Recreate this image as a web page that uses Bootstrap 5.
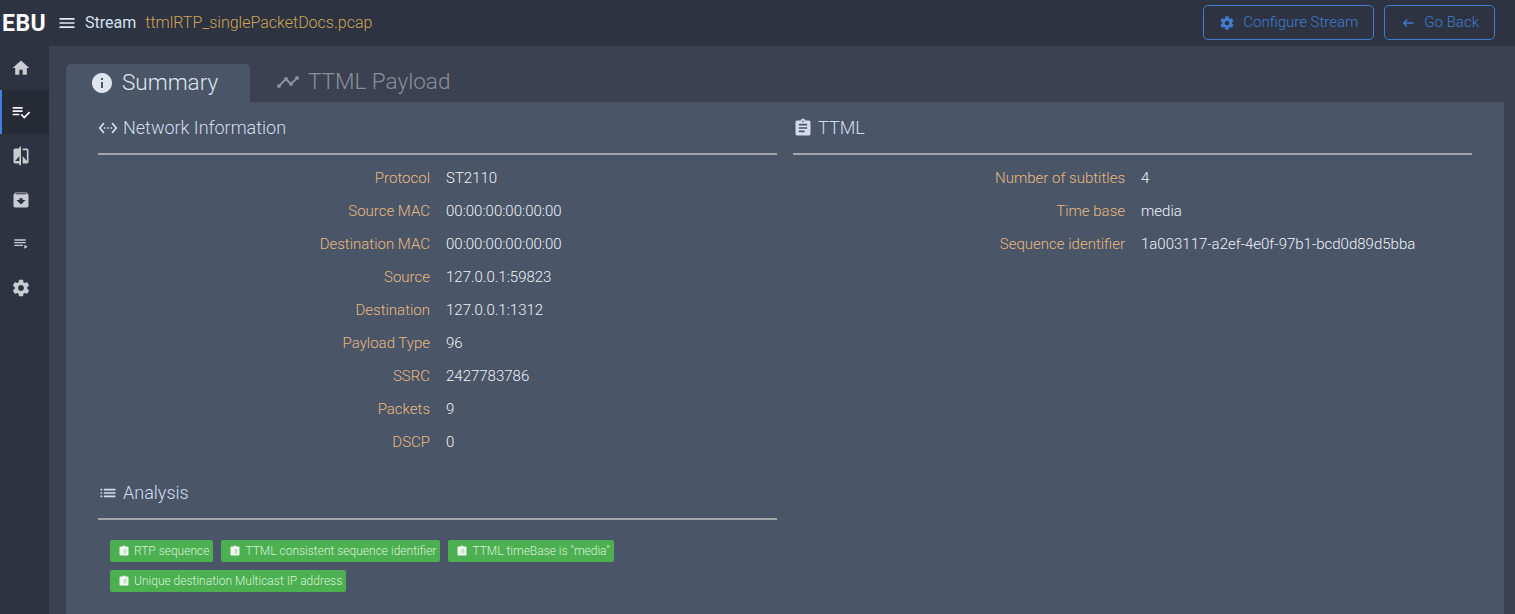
<!DOCTYPE html>
<html lang="en">
<head>
  <meta charset="UTF-8">
  <meta name="viewport" content="width=device-width, initial-scale=1.0">
  <title>Stream</title>
  <link href="https://cdn.jsdelivr.net/npm/bootstrap@5.3.0/dist/css/bootstrap.min.css" rel="stylesheet">
  <style>
    html, body { height: 100%; overflow: hidden; }
    body {
      font-family: Roboto, "Liberation Sans", sans-serif;
      font-weight: 300;
      background: #3b4151;
      color: #e8edf4;
    }
    svg { fill: currentColor; flex: none; display: block; }

    /* top bar */
    .topbar { height: 46px; background: #2d3340; padding-right: 20px; }
    .ebu-logo { width: 49px; padding-left: 2px; font-size: 23px; font-weight: 700; letter-spacing: .5px; color: #fff; line-height: 1; }
    .menu-icon { color: #e6e9ee; margin-left: 8px; margin-right: 8px; }
    .stream-title { font-size: 16px; font-weight: 400; color: #d5e2f2; }
    .stream-file { font-size: 16px; color: #cda557; margin-left: 9px; }
    .top-actions { gap: 10px; }
    .btn-top {
      height: 35px; padding: 0 15px; font-size: 15px; font-weight: 300;
      color: #437bd0; border: 1px solid #437bd0; border-radius: 5px; margin-top: -1px;
    }

    /* sidebar */
    .side-nav { width: 49px; background: #2d3340; flex: none; }
    .side-item { height: 44px; color: #c9ccd1; border-left: 2px solid transparent; padding-right: 9px; }
    .side-item.is-active { background: #262b35; border-left-color: #3f7fe0; color: #f2f4f7; }

    /* tabs */
    .main-area { padding: 18px 11px 0 17px; min-width: 0; }
    .tab-row { height: 38px; }
    .tab-item { font-size: 22.5px; padding: 0 24px; line-height: 1; }
    .tab-item.is-active { background: #4a5568; color: #dfe5ee; border-radius: 5px 5px 0 0; width: 184px; }
    .tab-item.is-muted { color: #8a8f9b; padding: 0 26px 2px; }
    .tab-label { margin-bottom: 2px; }

    /* panel */
    .panel-box { background: #4a5568; padding: 0 32px; }
    .sect-head { height: 53px; font-size: 18px; color: #d3dded; border-bottom: 2px solid #a2a5aa; gap: 5px; }
    .sect-gap { padding-top: 7px; }
    .sect-next { margin-top: 8px; }
    .info-row { height: 33px; font-size: 15px; }
    .info-label { width: 332px; text-align: right; color: #e9b97f; flex: none; }
    .info-value { margin-left: 16px; color: #eef3f9; }
    .check-list { padding: 20px 0 0 12px; gap: 8px; }
    .check-pill {
      height: 22px; background: #4caf50; color: #d9f1d9; font-size: 12px; font-weight: 300;
      border-radius: 2px; padding: 0 4px 0 8px;
    }
    .check-pill svg { color: #f1f8f1; margin-right: 4px; }
    .check-pill rect { fill: #bfe3c0; }
  </style>
</head>
<body class="d-flex flex-column">
  <header class="topbar d-flex align-items-center flex-none">
    <div class="ebu-logo">EBU</div>
    <svg class="menu-icon" width="20" height="20" viewBox="0 0 24 24"><path d="M3 18h18v-2H3v2zm0-5h18v-2H3v2zm0-7v2h18V6H3z"/></svg>
    <span class="stream-title">Stream</span>
    <span class="stream-file">ttmlRTP_singlePacketDocs.pcap</span>
    <div class="top-actions ms-auto d-flex">
      <button type="button" class="btn btn-top d-flex align-items-center gap-2">
        <svg width="16" height="16" viewBox="0 0 24 24"><path d="M19.43 12.98c.04-.32.07-.64.07-.98s-.03-.66-.07-.98l2.11-1.65c.19-.15.24-.42.12-.64l-2-3.46c-.12-.22-.39-.3-.61-.22l-2.49 1c-.52-.4-1.08-.73-1.69-.98l-.38-2.65C14.46 2.18 14.25 2 14 2h-4c-.25 0-.46.18-.49.42l-.38 2.65c-.61.25-1.17.59-1.69.98l-2.49-1c-.23-.09-.49 0-.61.22l-2 3.46c-.13.22-.07.49.12.64l2.11 1.65c-.04.32-.07.65-.07.98s.03.66.07.98l-2.11 1.65c-.19.15-.24.42-.12.64l2 3.46c.12.22.39.3.61.22l2.49-1c.52.4 1.08.73 1.69.98l.38 2.65c.03.24.24.42.49.42h4c.25 0 .46-.18.49-.42l.38-2.65c.61-.25 1.17-.59 1.69-.98l2.49 1c.23.09.49 0 .61-.22l2-3.46c.12-.22.07-.49-.12-.64l-2.11-1.65zM12 15.5c-1.93 0-3.5-1.57-3.5-3.5s1.57-3.5 3.5-3.5 3.5 1.57 3.5 3.5-1.57 3.5-3.5 3.5z"/></svg>
        Configure Stream
      </button>
      <button type="button" class="btn btn-top d-flex align-items-center gap-2">
        <svg width="16" height="16" viewBox="0 0 24 24"><path d="M20 11H7.83l3.59-3.59L10 6l-6 6 6 6 1.41-1.41L7.83 13H20v-2z"/></svg>
        Go Back
      </button>
    </div>
  </header>

  <div class="d-flex flex-grow-1" style="min-height:0">
    <nav class="side-nav">
      <div class="side-item d-flex align-items-center justify-content-center">
        <svg width="20" height="20" viewBox="0 0 24 24"><path d="M10 20v-6h4v6h5v-8h3L12 3 2 12h3v8z"/></svg>
      </div>
      <div class="side-item is-active d-flex align-items-center justify-content-center">
        <svg width="20" height="20" viewBox="0 0 24 24"><path d="M14 10H2v2h12v-2zm0-4H2v2h12V6zM2 16h8v-2H2v2zm19.5-4.5L23 13l-6.99 7-4.51-4.5L13 14l3.01 3 5.49-5.5z"/></svg>
      </div>
      <div class="side-item d-flex align-items-center justify-content-center">
        <svg width="20" height="20" viewBox="0 0 24 24"><path d="M10 3H5c-1.1 0-2 .9-2 2v14c0 1.1.9 2 2 2h5v2h2V1h-2v2zm0 15H5l5-6v6zm9-15h-5v2h5v13l-5-6v9h5c1.1 0 2-.9 2-2V5c0-1.1-.9-2-2-2z"/></svg>
      </div>
      <div class="side-item d-flex align-items-center justify-content-center">
        <svg width="20" height="20" viewBox="0 0 24 24"><path d="M20.54 5.23l-1.39-1.68C18.88 3.21 18.47 3 18 3H6c-.47 0-.88.21-1.16.55L3.46 5.23C3.17 5.57 3 6.02 3 6.5V19c0 1.1.9 2 2 2h14c1.1 0 2-.9 2-2V6.5c0-.48-.17-.93-.46-1.27zM12 17.5L6.5 12H10v-2h4v2h3.5L12 17.5zM5.12 5l.81-1h12l.94 1H5.12z"/></svg>
      </div>
      <div class="side-item d-flex align-items-center justify-content-center">
        <svg width="16" height="16" viewBox="0 0 24 24"><path d="M19 9H2v2h17V9zm0-4H2v2h17V5zM2 15h13v-2H2v2zm15-2v6l5-3-5-3z"/></svg>
      </div>
      <div class="side-item d-flex align-items-center justify-content-center">
        <svg width="20" height="20" viewBox="0 0 24 24"><path d="M19.43 12.98c.04-.32.07-.64.07-.98s-.03-.66-.07-.98l2.11-1.65c.19-.15.24-.42.12-.64l-2-3.46c-.12-.22-.39-.3-.61-.22l-2.49 1c-.52-.4-1.08-.73-1.69-.98l-.38-2.65C14.46 2.18 14.25 2 14 2h-4c-.25 0-.46.18-.49.42l-.38 2.65c-.61.25-1.17.59-1.69.98l-2.49-1c-.23-.09-.49 0-.61.22l-2 3.46c-.13.22-.07.49.12.64l2.11 1.65c-.04.32-.07.65-.07.98s.03.66.07.98l-2.11 1.65c-.19.15-.24.42-.12.64l2 3.46c.12.22.39.3.61.22l2.49-1c.52.4 1.08.73 1.69.98l.38 2.65c.03.24.24.42.49.42h4c.25 0 .46-.18.49-.42l.38-2.65c.61-.25 1.17-.59 1.69-.98l2.49 1c.23.09.49 0 .61-.22l2-3.46c.12-.22.07-.49-.12-.64l-2.11-1.65zM12 15.5c-1.93 0-3.5-1.57-3.5-3.5s1.57-3.5 3.5-3.5 3.5 1.57 3.5 3.5-1.57 3.5-3.5 3.5z"/></svg>
      </div>
    </nav>

    <main class="main-area flex-grow-1 d-flex flex-column">
      <div class="tab-row d-flex">
        <div class="tab-item is-active d-flex align-items-center gap-2">
          <svg width="24" height="24" viewBox="0 0 24 24"><path d="M12 2C6.48 2 2 6.48 2 12s4.48 10 10 10 10-4.48 10-10S17.52 2 12 2zm1 15h-2v-6h2v6zm0-8h-2V7h2v2z"/></svg>
          <span class="tab-label">Summary</span>
        </div>
        <div class="tab-item is-muted d-flex align-items-center gap-2">
          <svg width="24" height="24" viewBox="0 0 24 24"><path d="M23 8c0 1.1-.9 2-2 2-.18 0-.35-.02-.51-.07l-3.56 3.55c.05.16.07.34.07.52 0 1.1-.9 2-2 2s-2-.9-2-2c0-.18.02-.36.07-.52l-2.55-2.55c-.16.05-.34.07-.52.07s-.36-.02-.52-.07l-4.55 4.56c.05.16.07.33.07.51 0 1.1-.9 2-2 2s-2-.9-2-2 .9-2 2-2c.18 0 .35.02.51.07l4.56-4.55C8.02 9.36 8 9.18 8 9c0-1.1.9-2 2-2s2 .9 2 2c0 .18-.02.36-.07.52l2.55 2.55c.16-.05.34-.07.52-.07s.36.02.52.07l3.55-3.56C19.02 8.35 19 8.18 19 8c0-1.1.9-2 2-2s2 .9 2 2z"/></svg>
          <span class="tab-label">TTML Payload</span>
        </div>
      </div>

      <div class="panel-box flex-grow-1">
        <div class="row gx-3">
          <div class="col-6">
            <div class="sect-head d-flex align-items-center">
              <svg width="20" height="20" viewBox="0 0 24 24"><path d="M7.77 6.76L6.23 5.48.82 12l5.41 6.52 1.54-1.28L3.42 12l4.35-5.24zM7 13h2v-2H7v2zm10-2h-2v2h2v-2zm-6 2h2v-2h-2v2zm6.77-7.52l-1.54 1.28L20.58 12l-4.35 5.24 1.54 1.28L23.18 12l-5.41-6.52z"/></svg>
              Network Information
            </div>
            <div class="sect-gap">
              <div class="info-row d-flex align-items-center"><span class="info-label">Protocol</span><span class="info-value">ST2110</span></div>
              <div class="info-row d-flex align-items-center"><span class="info-label">Source MAC</span><span class="info-value">00:00:00:00:00:00</span></div>
              <div class="info-row d-flex align-items-center"><span class="info-label">Destination MAC</span><span class="info-value">00:00:00:00:00:00</span></div>
              <div class="info-row d-flex align-items-center"><span class="info-label">Source</span><span class="info-value">127.0.0.1:59823</span></div>
              <div class="info-row d-flex align-items-center"><span class="info-label">Destination</span><span class="info-value">127.0.0.1:1312</span></div>
              <div class="info-row d-flex align-items-center"><span class="info-label">Payload Type</span><span class="info-value">96</span></div>
              <div class="info-row d-flex align-items-center"><span class="info-label">SSRC</span><span class="info-value">2427783786</span></div>
              <div class="info-row d-flex align-items-center"><span class="info-label">Packets</span><span class="info-value">9</span></div>
              <div class="info-row d-flex align-items-center"><span class="info-label">DSCP</span><span class="info-value">0</span></div>
            </div>
            <div class="sect-head sect-next d-flex align-items-center">
              <svg width="20" height="20" viewBox="0 0 24 24"><path d="M3 13h2v-2H3v2zm0 4h2v-2H3v2zm0-8h2V7H3v2zm4 4h14v-2H7v2zm0 4h14v-2H7v2zM7 7v2h14V7H7z"/></svg>
              Analysis
            </div>
            <div class="check-list d-flex flex-wrap">
              <span class="check-pill d-inline-flex align-items-center"><svg width="12" height="12" viewBox="0 0 24 24"><path d="M19 3h-4.18C14.4 1.84 13.3 1 12 1c-1.3 0-2.4.84-2.82 2H5c-1.1 0-2 .9-2 2v14c0 1.1.9 2 2 2h14c1.1 0 2-.9 2-2V5c0-1.1-.9-2-2-2z"/><rect x="11" y="8" width="6" height="9"/></svg>RTP sequence</span>
              <span class="check-pill d-inline-flex align-items-center"><svg width="12" height="12" viewBox="0 0 24 24"><path d="M19 3h-4.18C14.4 1.84 13.3 1 12 1c-1.3 0-2.4.84-2.82 2H5c-1.1 0-2 .9-2 2v14c0 1.1.9 2 2 2h14c1.1 0 2-.9 2-2V5c0-1.1-.9-2-2-2z"/><rect x="11" y="8" width="6" height="9"/></svg>TTML consistent sequence identifier</span>
              <span class="check-pill d-inline-flex align-items-center"><svg width="12" height="12" viewBox="0 0 24 24"><path d="M19 3h-4.18C14.4 1.84 13.3 1 12 1c-1.3 0-2.4.84-2.82 2H5c-1.1 0-2 .9-2 2v14c0 1.1.9 2 2 2h14c1.1 0 2-.9 2-2V5c0-1.1-.9-2-2-2z"/><rect x="11" y="8" width="6" height="9"/></svg>TTML timeBase is "media"</span>
              <span class="check-pill d-inline-flex align-items-center"><svg width="12" height="12" viewBox="0 0 24 24"><path d="M19 3h-4.18C14.4 1.84 13.3 1 12 1c-1.3 0-2.4.84-2.82 2H5c-1.1 0-2 .9-2 2v14c0 1.1.9 2 2 2h14c1.1 0 2-.9 2-2V5c0-1.1-.9-2-2-2z"/><rect x="11" y="8" width="6" height="9"/></svg>Unique destination Multicast IP address</span>
            </div>
          </div>
          <div class="col-6">
            <div class="sect-head d-flex align-items-center">
              <svg width="20" height="20" viewBox="0 0 24 24"><path d="M19 3h-4.18C14.4 1.84 13.3 1 12 1c-1.3 0-2.4.84-2.82 2H5c-1.1 0-2 .9-2 2v14c0 1.1.9 2 2 2h14c1.1 0 2-.9 2-2V5c0-1.1-.9-2-2-2zm-7 0c.55 0 1 .45 1 1s-.45 1-1 1-1-.45-1-1 .45-1 1-1zm2 14H7v-2h7v2zm3-4H7v-2h10v2zm0-4H7V7h10v2z"/></svg>
              TTML
            </div>
            <div class="sect-gap">
              <div class="info-row d-flex align-items-center"><span class="info-label">Number of subtitles</span><span class="info-value">4</span></div>
              <div class="info-row d-flex align-items-center"><span class="info-label">Time base</span><span class="info-value">media</span></div>
              <div class="info-row d-flex align-items-center"><span class="info-label">Sequence identifier</span><span class="info-value">1a003117-a2ef-4e0f-97b1-bcd0d89d5bba</span></div>
            </div>
          </div>
        </div>
      </div>
    </main>
  </div>
  <script src="https://cdn.jsdelivr.net/npm/bootstrap@5.3.0/dist/js/bootstrap.bundle.min.js"></script>
</body>
</html>
